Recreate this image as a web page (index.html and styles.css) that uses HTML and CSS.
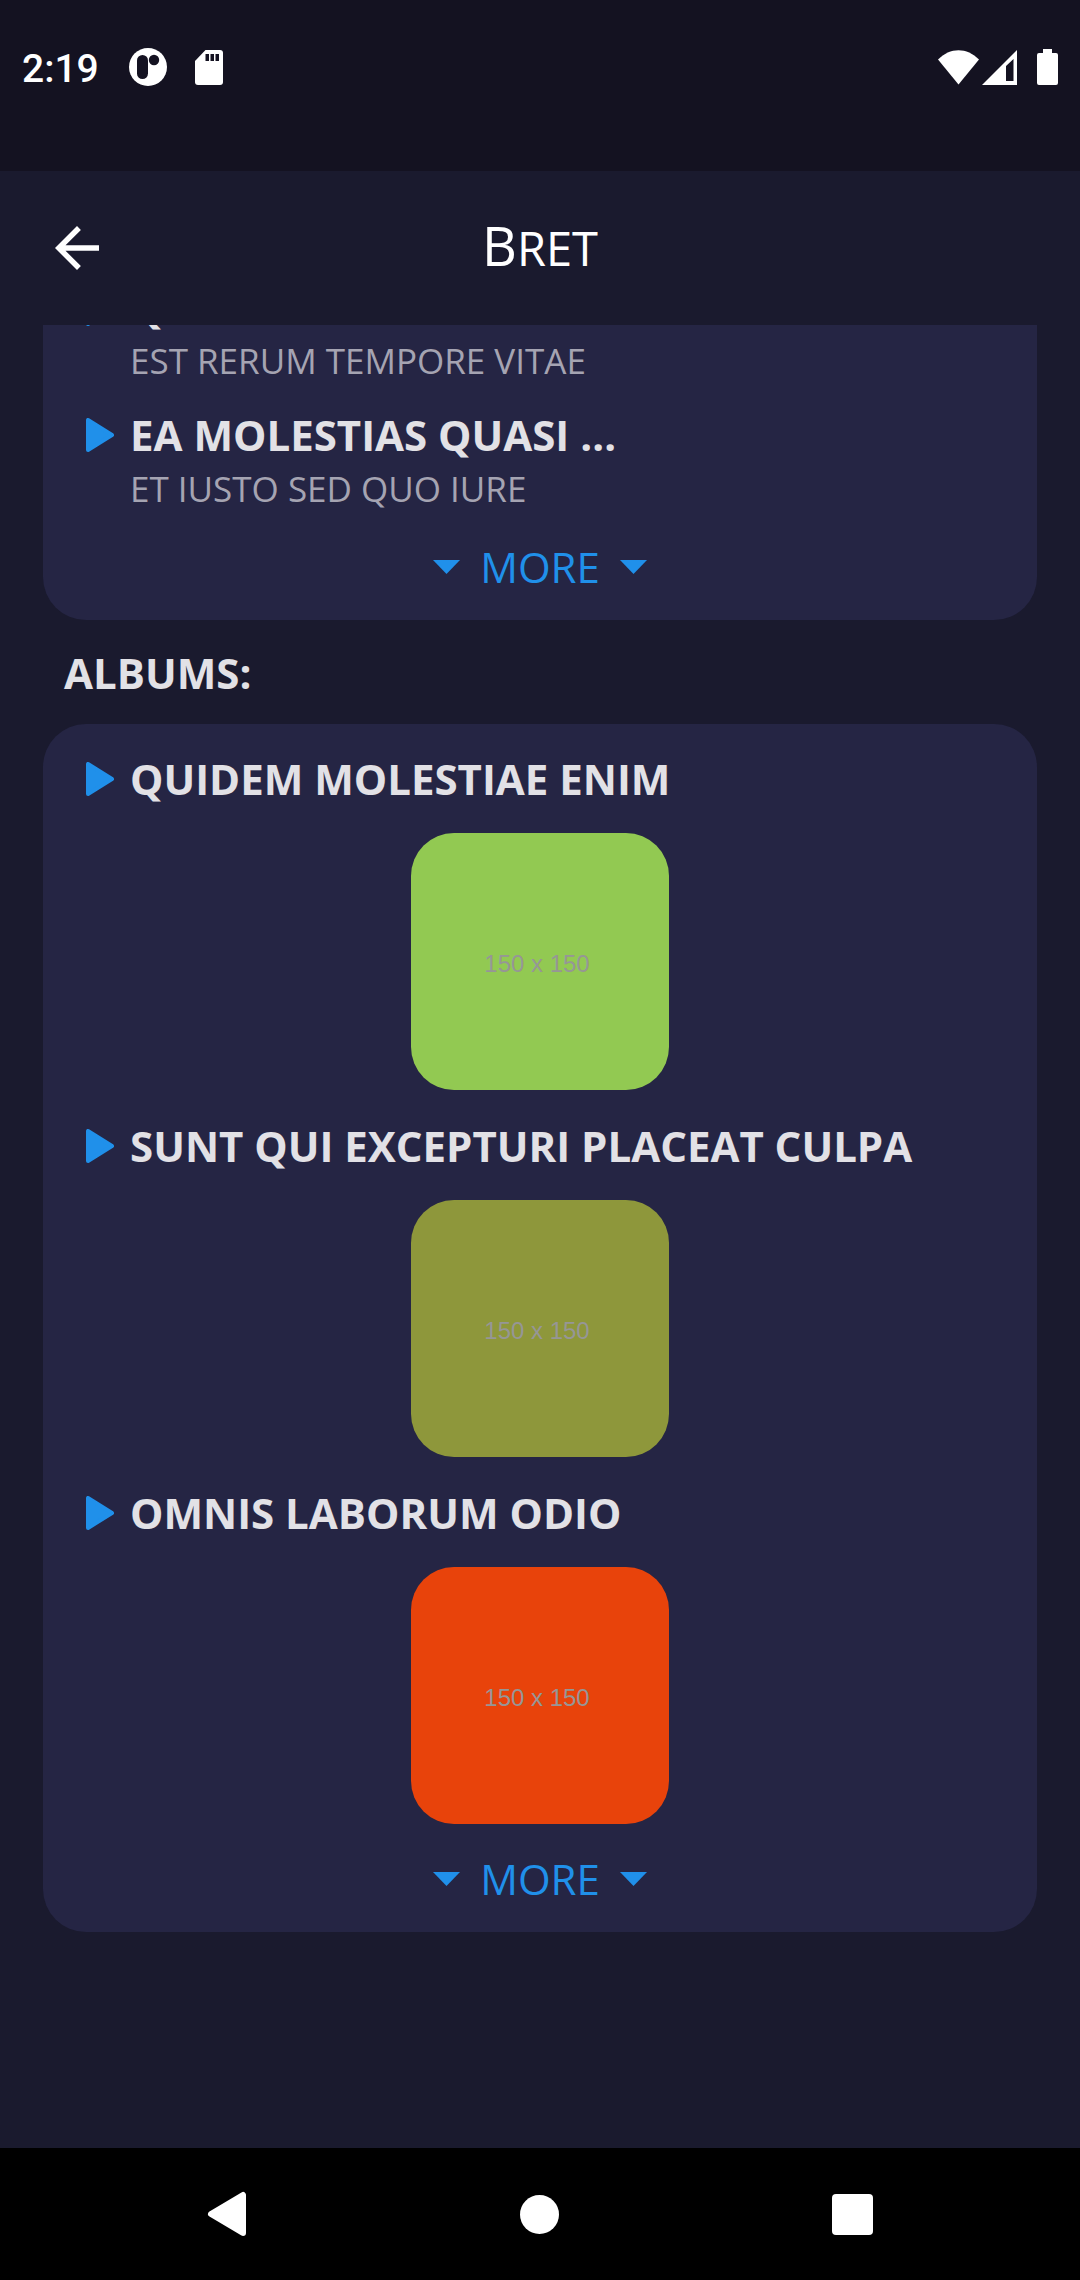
FILE: index.html
```
<!DOCTYPE html>
<html lang="en">
<head>
<meta charset="utf-8">
<meta name="viewport" content="width=device-width, initial-scale=1">
<title>Bret</title>
<link rel="stylesheet" href="styles.css">
</head>
<body>
<div class="status">
  <time class="status-time">2:19</time>
  <svg class="status-app" width="38" height="38" viewBox="0 0 38 38" aria-hidden="true">
    <circle cx="19" cy="19" r="19" fill="#fff"/>
    <rect class="hole" x="8" y="7" width="11" height="24" rx="5.5"/>
    <circle class="hole" cx="25" cy="12" r="5.2"/>
  </svg>
  <svg class="status-sd" width="28" height="35" viewBox="0 0 28 35" aria-hidden="true">
    <path fill="#fff" d="M10.5 0H25a3 3 0 0 1 3 3v29a3 3 0 0 1-3 3H3a3 3 0 0 1-3-3V11z"/>
    <path class="hole" d="M10.5 4H14v7h-3.500zM15.500 4H19v7h-3.500zM20.500 4H24v7h-3.500z"/>
  </svg>
  <div class="status-right">
    <svg width="41" height="35" viewBox="0 0 41 35" aria-hidden="true"><path fill="#fff" d="M0 9.500C12 -3 29 -3 41 9.500L20.500 34.500z"/></svg>
    <svg class="signal" width="35" height="35" viewBox="0 0 35 35" aria-hidden="true"><path fill="#fff" fill-rule="evenodd" d="M35 0v35H0zM31.500 9L24 16v15h7.500z"/></svg>
    <svg width="21" height="36" viewBox="0 0 21 36" aria-hidden="true"><path fill="#fff" d="M6 0h9v4h4a2 2 0 0 1 2 2v28a2 2 0 0 1-2 2H2a2 2 0 0 1-2-2V6a2 2 0 0 1 2-2h4z"/></svg>
  </div>
</div>

<header class="topbar">
  <button class="back" type="button" aria-label="Back">
    <svg width="66" height="66" viewBox="0 0 24 24"><path fill="#fff" d="M20 11H7.830l5.590-5.590L12 4l-8 8 8 8 1.410-1.410L7.830 13H20z"/></svg>
  </button>
  <h1 class="title">Bret</h1>
</header>

<main class="content">
  <section class="card card-scrolled" aria-label="Posts">
    <article class="post">
      <h3 class="item-title item-title-cut">
        <svg class="play" width="28" height="34" viewBox="0 0 28 34" aria-hidden="true"><path d="M2 2v30l24-15z"/></svg>
        <span>QUI EST ESSE</span>
      </h3>
      <p class="post-body">EST RERUM TEMPORE VITAE</p>
    </article>
    <article class="post">
      <h3 class="item-title">
        <svg class="play" width="28" height="34" viewBox="0 0 28 34" aria-hidden="true"><path d="M2 2v30l24-15z"/></svg>
        <span>EA MOLESTIAS QUASI …</span>
      </h3>
      <p class="post-body">ET IUSTO SED QUO IURE</p>
    </article>
    <button class="more" type="button">
      <svg width="27" height="14" viewBox="0 0 27 14" aria-hidden="true"><path d="M0 0h27L13.500 14z"/></svg>
      <span>MORE</span>
      <svg width="27" height="14" viewBox="0 0 27 14" aria-hidden="true"><path d="M0 0h27L13.500 14z"/></svg>
    </button>
  </section>

  <h2 class="section-title">ALBUMS:</h2>

  <section class="card" aria-label="Albums">
    <article class="album">
      <h3 class="item-title">
        <svg class="play" width="28" height="34" viewBox="0 0 28 34" aria-hidden="true"><path d="M2 2v30l24-15z"/></svg>
        <span>QUIDEM MOLESTIAE ENIM</span>
      </h3>
      <div class="thumb thumb-green">150 x 150</div>
    </article>
    <article class="album">
      <h3 class="item-title">
        <svg class="play" width="28" height="34" viewBox="0 0 28 34" aria-hidden="true"><path d="M2 2v30l24-15z"/></svg>
        <span>SUNT QUI EXCEPTURI PLACEAT CULPA</span>
      </h3>
      <div class="thumb thumb-olive">150 x 150</div>
    </article>
    <article class="album">
      <h3 class="item-title">
        <svg class="play" width="28" height="34" viewBox="0 0 28 34" aria-hidden="true"><path d="M2 2v30l24-15z"/></svg>
        <span>OMNIS LABORUM ODIO</span>
      </h3>
      <div class="thumb thumb-orange">150 x 150</div>
    </article>
    <button class="more" type="button">
      <svg width="27" height="14" viewBox="0 0 27 14" aria-hidden="true"><path d="M0 0h27L13.500 14z"/></svg>
      <span>MORE</span>
      <svg width="27" height="14" viewBox="0 0 27 14" aria-hidden="true"><path d="M0 0h27L13.500 14z"/></svg>
    </button>
  </section>
</main>

<nav class="navbar" aria-label="System">
  <button type="button" aria-label="Back">
    <svg width="40" height="46" viewBox="0 0 40 46"><path fill="#fff" stroke="#fff" stroke-width="6" stroke-linejoin="round" d="M36 4v38L4 23z"/></svg>
  </button>
  <button type="button" aria-label="Home">
    <svg width="39" height="39" viewBox="0 0 39 39"><circle cx="19.500" cy="19.500" r="19.500" fill="#fff"/></svg>
  </button>
  <button type="button" aria-label="Recent apps">
    <svg width="41" height="41" viewBox="0 0 41 41"><rect width="41" height="41" rx="4" fill="#fff"/></svg>
  </button>
</nav>
</body>
</html>
```

FILE: styles.css
```
* {
  box-sizing: border-box;
}

body {
  margin: 0;
  min-height: 100vh;
  display: flex;
  flex-direction: column;
  background: #1a1a2e;
  color: #e2e1e6;
  font-family: "Open Sans", "Noto Sans", sans-serif;
}

h1,
h2,
h3,
p {
  margin: 0;
}

svg {
  display: block;
  flex: none;
}

button {
  margin: 0;
  padding: 0;
  border: 0;
  background: none;
  font: inherit;
  color: inherit;
}

/* Status bar */
.status {
  display: flex;
  align-items: center;
  padding: 36px 22px 73px;
  background: #141221;
}

.status-time {
  padding-top: 4px;
  font: 500 39px/58px Roboto, sans-serif;
  color: #fff;
}

.status-app {
  margin-left: 30px;
}

.status-sd {
  margin-left: 28px;
}

.hole {
  fill: #141221;
}

.status-right {
  display: flex;
  align-items: center;
  margin-left: auto;
}

.signal {
  margin: 0 20px 0 3px;
}

/* App bar */
.topbar {
  display: grid;
  grid-template-columns: 66px 1fr 66px;
  align-items: center;
  padding: 40px 44px;
}

.title {
  font-size: 47px;
  font-weight: 400;
  line-height: 74px;
  text-align: center;
  text-transform: uppercase;
  color: #fff;
}

.title::first-letter {
  font-size: 54px;
  line-height: 54px;
}

/* Scrolling content */
.content {
  flex: 1;
  padding: 0 43px 43px;
}

.card {
  padding: 25px 43px;
  border-radius: 43px;
  background: #252544;
}

.card-scrolled {
  padding-top: 0;
  border-top-left-radius: 0;
  border-top-right-radius: 0;
}

.section-title {
  padding: 23px 21px 21px;
  font-size: 42px;
  font-weight: 700;
  line-height: 60px;
}

.item-title {
  display: flex;
  align-items: center;
  gap: 16px;
  font-size: 42px;
  font-weight: 700;
  line-height: 60px;
}

.item-title-cut {
  height: 12px;
  align-items: flex-end;
  overflow: hidden;
}

.item-title-cut .play {
  margin-bottom: 11px;
}

.play {
  fill: #2090ea;
  stroke: #2090ea;
  stroke-width: 4px;
  stroke-linejoin: round;
}

.post + .post {
  margin-top: 24px;
}

.post-body {
  margin: 4px 0 0 44px;
  font-size: 35px;
  line-height: 40px;
  color: #a5a4b2;
}

.album + .album {
  margin-top: 26px;
}

.thumb {
  display: grid;
  place-items: center;
  width: 258px;
  height: 257px;
  margin: 24px auto 0;
  padding: 5px 6px 0 0;
  border-radius: 43px;
  font: 400 24px/32px "Liberation Sans", sans-serif;
  color: #969696;
}

.thumb-green {
  background: #92c952;
}

.thumb-olive {
  background: #8e973b;
}

.thumb-orange {
  background: #e8430b;
}

.more {
  display: flex;
  align-items: center;
  gap: 20px;
  margin: 30px auto 0;
  font-size: 42px;
  line-height: 56px;
  color: #2090ea;
}

.album + .more {
  margin-top: 27px;
}

.more svg {
  fill: #2090ea;
}

/* System navigation */
.navbar {
  display: grid;
  grid-template-columns: repeat(3, 1fr);
  place-items: center;
  height: 132px;
  padding: 0 71px;
  background: #000;
}
```
